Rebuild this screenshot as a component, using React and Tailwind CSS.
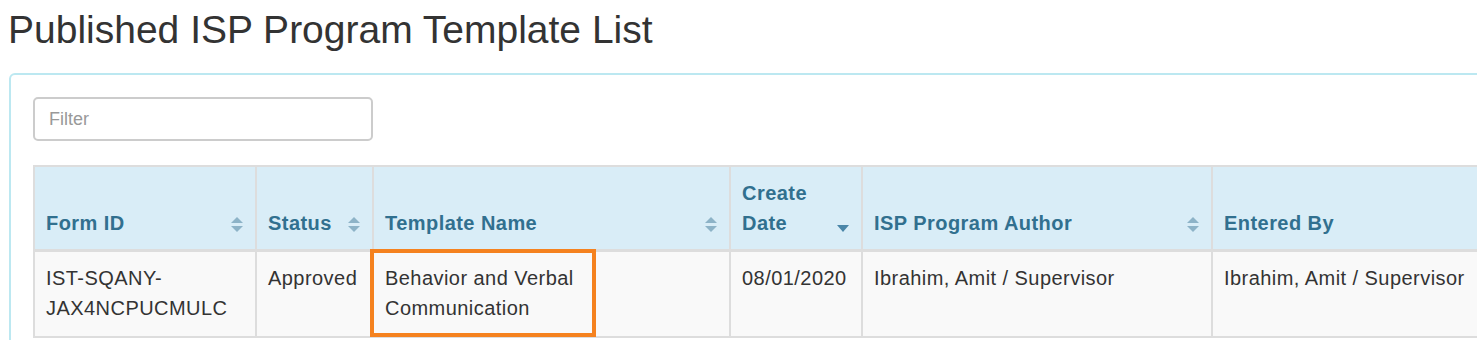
import React from 'react';

const font = { fontFamily: '"Liberation Sans", Arial, sans-serif' };

function SortBoth() {
  return (
    <svg width="12" height="16" viewBox="0 0 12 16" className="shrink-0 mb-[5px]">
      <path d="M6 0 L12 6 L0 6 Z" fill="#8db3c7" />
      <path d="M0 9 L12 9 L6 15 Z" fill="#8db3c7" />
    </svg>
  );
}

function SortDesc() {
  return (
    <svg width="12" height="7" viewBox="0 0 12 7" className="shrink-0 mb-[6px]">
      <path d="M0 0 L12 0 L6 7 Z" fill="#4a86a8" />
    </svg>
  );
}

const columns = [
  { label: 'Form ID', w: 'w-[222px]', sort: 'both' },
  { label: 'Status', w: 'w-[117px]', sort: 'both' },
  { label: 'Template Name', w: 'w-[357px]', sort: 'both' },
  { label: 'Create Date', w: 'w-[132px]', sort: 'desc' },
  { label: 'ISP Program Author', w: 'w-[350px]', sort: 'both' },
  { label: 'Entered By', w: 'w-[330px]', sort: 'none' },
];

const cell = 'border-2 border-[#ddd] pl-[11px] pr-[12px] pt-[11px] pb-[13px]';

export default function App() {
  return (
    <div className="w-[1477px] h-[340px] overflow-hidden bg-white text-[#333]" style={font}>
      <h1 className="pl-[8px] pt-[6px] h-[73px] text-[39px] leading-[48px] text-[#333] font-normal">
        Published ISP Program Template List
      </h1>
      <div className="ml-[9px] w-[1600px] h-[400px] border-2 border-[#bce8f1] rounded-tl-[6px] pt-[22px] pl-[22px]">
        <input
          placeholder="Filter"
          className="block w-[340px] h-[44px] border-2 border-[#ccc] rounded-[5px] px-[14px] text-[18px] placeholder:text-[#999] outline-none"
        />
        <table className="mt-[24px] table-fixed border-collapse text-[20px] leading-[30px] tracking-[0.45px]">
          <thead>
            <tr className="bg-[#d9edf7]">
              {columns.map((c) => (
                <th
                  key={c.label}
                  className={`${c.w} border-2 border-[#ddd] border-b-[3px] pl-[11px] pr-[12px] pt-[11px] pb-[11px] align-bottom text-left font-bold text-[#31708f]`}
                >
                  <div className="flex items-end justify-between gap-2">
                    <span className={c.label === 'Create Date' ? 'w-[70px]' : ''}>{c.label}</span>
                    {c.sort === 'both' && <SortBoth />}
                    {c.sort === 'desc' && <SortDesc />}
                  </div>
                </th>
              ))}
            </tr>
          </thead>
          <tbody>
            <tr className="bg-[#f9f9f9] align-top">
              <td className={cell}>IST-SQANY-JAX4NCPUCMULC</td>
              <td className={cell}>Approved</td>
              <td className={`relative ${cell}`}>
                <div className="absolute left-[-4px] top-[-3px] w-[226px] h-[88px] border-4 border-[#f5821f]" />
                <span className="block w-[205px]">Behavior and Verbal Communication</span>
              </td>
              <td className={cell}>08/01/2020</td>
              <td className={cell}>Ibrahim, Amit / Supervisor</td>
              <td className={cell}>Ibrahim, Amit / Supervisor</td>
            </tr>
          </tbody>
        </table>
      </div>
    </div>
  );
}
